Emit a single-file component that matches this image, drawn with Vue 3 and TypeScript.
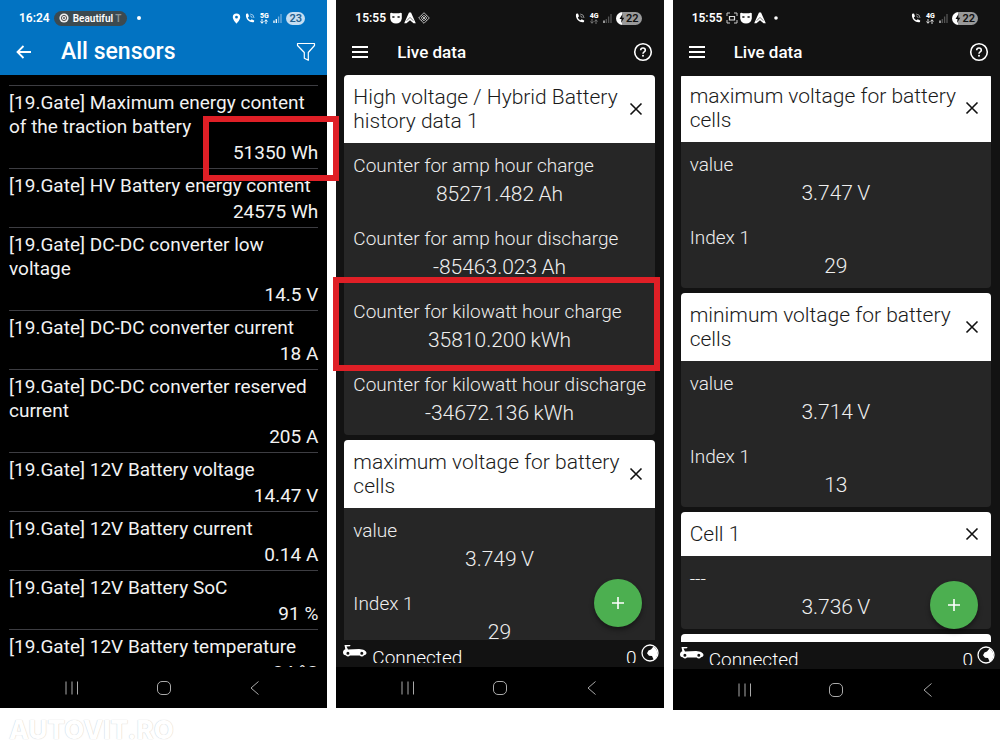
<script setup lang="ts">
interface Sensor { name: string; value: string; marked?: boolean }
interface Reading { label: string; value: string; marked?: boolean }
interface Card { title: string; rows: Reading[] }
interface LivePhone { id: string; count: string; icons: string[]; cards: Card[] }

const sensors: Sensor[] = [
  { name: '[19.Gate] Maximum energy content of the traction battery', value: '51350 Wh', marked: true },
  { name: '[19.Gate] HV Battery energy content', value: '24575 Wh' },
  { name: '[19.Gate] DC-DC converter low voltage', value: '14.5 V' },
  { name: '[19.Gate] DC-DC converter current', value: '18 A' },
  { name: '[19.Gate] DC-DC converter reserved current', value: '205 A' },
  { name: '[19.Gate] 12V Battery voltage', value: '14.47 V' },
  { name: '[19.Gate] 12V Battery current', value: '0.14 A' },
  { name: '[19.Gate] 12V Battery SoC', value: '91 %' },
  { name: '[19.Gate] 12V Battery temperature', value: '24 °C' },
]

const phones: LivePhone[] = [
  {
    id: 'history',
    count: '0',
    icons: ['mask', 'arrow', 'diamond'],
    cards: [
      {
        title: 'High voltage / Hybrid Battery history data 1',
        rows: [
          { label: 'Counter for amp hour charge', value: '85271.482 Ah' },
          { label: 'Counter for amp hour discharge', value: '-85463.023 Ah' },
          { label: 'Counter for kilowatt hour charge', value: '35810.200 kWh', marked: true },
          { label: 'Counter for kilowatt hour discharge', value: '-34672.136 kWh' },
        ],
      },
      {
        title: 'maximum voltage for battery cells',
        rows: [
          { label: 'value', value: '3.749 V' },
          { label: 'Index 1', value: '29' },
        ],
      },
    ],
  },
  {
    id: 'cells',
    count: '0',
    icons: ['scan', 'mask', 'arrow', 'dot'],
    cards: [
      {
        title: 'maximum voltage for battery cells',
        rows: [
          { label: 'value', value: '3.747 V' },
          { label: 'Index 1', value: '29' },
        ],
      },
      {
        title: 'minimum voltage for battery cells',
        rows: [
          { label: 'value', value: '3.714 V' },
          { label: 'Index 1', value: '13' },
        ],
      },
      { title: 'Cell 1', rows: [{ label: '---', value: '3.736 V' }] },
      { title: '', rows: [] },
    ],
  },
]

// A thin space separates a number from its unit.
const withUnit = (value: string): string => value.replace(' ', '\u2009')
</script>

<template>
  <main class="page">
    <div class="phones">
      <section class="phone sensors">
        <header class="top">
          <div class="status">
            <span>16:24</span>
            <span class="pill">
              <svg width="10" height="10" viewBox="0 0 10 10"><circle cx="5" cy="5" r="4.6" fill="#eee" /><circle cx="5" cy="5" r="2.6" fill="none" stroke="#555" /><circle cx="5" cy="5" r="1" fill="#555" /></svg>
              <span>Beautiful <i>T</i></span>
            </span>
            <svg class="lone-dot" width="4" height="4" viewBox="0 0 4 4"><circle cx="2" cy="2" r="2" fill="#fff" /></svg>
            <span class="push"></span>
            <svg width="9" height="11" viewBox="0 0 9 11"><path fill="#fff" fill-rule="evenodd" d="M4.5 0.5a3.7 3.7 0 0 0-3.7 3.7c0 2.6 3.7 6.4 3.7 6.4s3.7-3.8 3.7-6.4A3.7 3.7 0 0 0 4.5 .5zm0 2.3a1.4 1.4 0 1 1 0 2.8 1.4 1.4 0 0 1 0-2.8z" /></svg>
            <svg width="10" height="10" viewBox="0 0 10 10"><path fill="#fff" d="M1.200.8 3 .6l1 2.600-1.200 1.200c.6 1.300 1.400 2.200 2.700 2.900l1.200-1.100L9.200 7.400 9 9.100C4.500 10.300-.3 5.500 1.200.8z" /><path d="M5.200 1a4 4 0 0 1 3.800 4M5.200 2.900A2 2 0 0 1 7.100 5" fill="none" stroke="#a9d0ee" stroke-width=".9" /></svg>
            <span class="net"><b>5G</b><svg width="8" height="5" viewBox="0 0 8 5"><path d="M2 0v4M.5 2.500 2 4.300l1.500-1.800M6 5V1M4.500 2.500 6 .7l1.500 1.800" fill="none" stroke="#fff" /></svg></span>
            <svg width="9" height="10" viewBox="0 0 9 10"><path d="M1 7.500V10M3.300 6v4" stroke="#fff" stroke-width="1.300" /><path d="M5.600 3.500V10M8 1v9" stroke="#74afdd" stroke-width="1.300" /></svg>
            <span class="battery">23</span>
          </div>
          <div class="bar">
            <button aria-label="Back"><svg width="24" height="24" viewBox="0 0 24 24"><path d="M19 12H6M11.500 6 5.500 12l6 6" fill="none" stroke="#fff" stroke-width="1.800" /></svg></button>
            <h1>All sensors</h1>
            <button aria-label="Filter"><svg width="24" height="24" viewBox="0 0 24 24"><path d="M3.500 3.500h17v2l-6.200 7v7.800l-4-2v-5.800L3.500 5.500z" fill="none" stroke="#fff" stroke-width="1.200" stroke-linejoin="round" /></svg></button>
          </div>
        </header>
        <ul class="list">
          <li v-for="s in sensors" :key="s.name">
            <span class="name">{{ s.name }}</span>
            <span class="val">{{ s.value }}</span>
            <span v-if="s.marked" class="mark"></span>
          </li>
        </ul>
        <nav class="nav">
          <button aria-label="Recent apps"><svg width="16" height="16" viewBox="0 0 16 16"><path d="M2 1.500v13M8 1.500v13M13.500 1.500v13" stroke="#aaa" /></svg></button>
          <button aria-label="Home"><svg width="16" height="16" viewBox="0 0 16 16"><rect x="1.500" y="1.500" width="13" height="13" rx="4.500" fill="none" stroke="#aaa" /></svg></button>
          <button aria-label="Back"><svg width="16" height="16" viewBox="0 0 16 16"><path d="M11.500 1.500 4 8l7.500 6.500" fill="none" stroke="#aaa" /></svg></button>
        </nav>
      </section>

      <section v-for="p in phones" :key="p.id" class="phone live" :class="p.id">
        <header class="top">
          <div class="status">
            <span>15:55</span>
            <span class="notes">
              <template v-for="i in p.icons" :key="i">
                <svg v-if="i === 'mask'" width="12" height="12" viewBox="0 0 12 12"><path fill="#fff" fill-rule="evenodd" d="M.2 1.200Q1 .4 3 1.200h6q2-.8 2.800 0V6.500Q11 11.500 6 11.500T.2 6.500zM2.300 4.200v1.600h2.200V4.200zM7.500 4.200v1.600h2.200V4.200z" /></svg>
                <svg v-else-if="i === 'arrow'" width="12" height="12" viewBox="0 0 12 12"><path fill="#fff" d="M5 .5h2L11.800 11.300H9.500L6 8.300l-3.500 3H.2z" /><path d="M2.600 8.800 6 5.400l3.400 3.400" fill="none" stroke="#555" stroke-width=".8" /></svg>
                <svg v-else-if="i === 'diamond'" width="12" height="12" viewBox="0 0 12 12"><path d="M6 .7 11.300 6 6 11.300.7 6zM3.400 3.400l5.200 5.200M8.600 3.400 3.400 8.600M6 3.200 8.800 6 6 8.800 3.200 6z" fill="none" stroke="#ccc" stroke-width=".9" /></svg>
                <svg v-else-if="i === 'scan'" width="12" height="12" viewBox="0 0 12 12"><path d="M1 4V1h3M8 1h3v3M11 8v3H8M4 11H1V8" fill="none" stroke="#ccc" /><path d="M3.500 4.500h5v3.500h-5z" fill="none" stroke="#ddd" stroke-width="1.200" /></svg>
                <svg v-else class="end-dot" width="4" height="4" viewBox="0 0 4 4"><circle cx="2" cy="2" r="1.800" fill="#fff" /></svg>
              </template>
            </span>
            <span class="push"></span>
            <svg width="10" height="10" viewBox="0 0 10 10"><path fill="#fff" d="M1.200.8 3 .6l1 2.600-1.200 1.200c.6 1.300 1.400 2.200 2.700 2.900l1.200-1.100L9.200 7.400 9 9.100C4.500 10.300-.3 5.500 1.200.8z" /><path d="M5.200 1a4 4 0 0 1 3.800 4M5.200 2.900A2 2 0 0 1 7.100 5" fill="none" stroke="#999" stroke-width=".9" /></svg>
            <span class="net"><b>4G</b><svg width="8" height="5" viewBox="0 0 8 5"><path d="M2 0v4M.5 2.500 2 4.300l1.500-1.800M6 5V1M4.500 2.500 6 .7l1.500 1.800" fill="none" :stroke="p.id === 'cells' ? '#ddd' : '#777'" /></svg></span>
            <svg width="9" height="10" viewBox="0 0 9 10"><path d="M1 7.500V10" stroke="#ddd" stroke-width="1.300" /><path d="M3.300 6v4M5.600 3.500V10M8 1v9" stroke="#555" stroke-width="1.300" /></svg>
            <span class="battery"><svg width="6" height="9" viewBox="0 0 6 9"><path d="M3.500 0 .5 5h2L2 9l3.300-5.200h-2z" fill="#111" /></svg>22</span>
          </div>
          <div class="bar">
            <button aria-label="Menu"><svg width="24" height="24" viewBox="0 0 24 24"><path d="M4 7h16M4 12h16M4 17h16" stroke="#fff" stroke-width="1.800" /></svg></button>
            <h1>Live data</h1>
            <button aria-label="Help"><svg width="24" height="24" viewBox="0 0 24 24"><circle cx="12" cy="12" r="8.300" fill="none" stroke="#fff" stroke-width="1.600" /><path d="M9.700 10.200c0-3 4.600-3 4.600 0 0 1.700-2.300 1.700-2.300 3.500" fill="none" stroke="#fff" stroke-width="1.600" /><circle cx="12" cy="15.800" r="1" fill="#fff" /></svg></button>
          </div>
        </header>
        <div class="scroll">
          <div class="cards">
            <article v-for="c in p.cards" :key="c.title" class="card">
              <div class="head">
                <h2>{{ c.title }}</h2>
                <button aria-label="Remove"><svg width="14" height="14" viewBox="0 0 14 14"><path d="M1.500 1.500l11 11M12.500 1.500l-11 11" stroke="#111" stroke-width="1.600" /></svg></button>
              </div>
              <div v-for="r in c.rows" :key="r.label" class="row">
                <div class="label">{{ r.label }}</div>
                <div class="reading">{{ withUnit(r.value) }}</div>
                <span v-if="r.marked" class="mark"></span>
              </div>
            </article>
          </div>
        </div>
        <button class="fab" aria-label="Add"><svg width="14" height="14" viewBox="0 0 14 14"><path d="M7 1v12M1 7h12" stroke="#fff" stroke-width="1.600" /></svg></button>
        <footer class="link">
          <svg width="26" height="14" viewBox="0 0 26 14"><path fill="#fff" fill-rule="evenodd" d="M2.500 1h6l-.5 1.200-3.500.3 1.500 3 11-.5c4.500.3 7.500 2 7.500 4 0 1.300-1 2-2.500 2.200a2.600 2.600 0 0 1-4.300.3H8a2.700 2.700 0 0 1-4.300-.3C2 11 1 10.200 1 8.500 1 7 1.800 5.800 3.300 5.200zM5.900 7.800a1.500 1.500 0 1 0 0 3 1.500 1.500 0 0 0 0-3zm13.900 0a1.500 1.500 0 1 0 0 3 1.500 1.500 0 0 0 0-3z" /></svg>
          <span class="word">Connected</span>
          <span class="word count">{{ p.count }}</span>
          <svg width="18" height="18" viewBox="0 0 18 18"><circle cx="9" cy="9" r="8" fill="#121212" stroke="#fff" stroke-width="1.300" /><path fill="#fff" d="M12.500 2.500 10 5.500 7.500 6.500 6 9.200l2 2.500 3 .3 1.800 4a8 8 0 0 0-.3-13.500z" /></svg>
        </footer>
        <nav class="nav">
          <button aria-label="Recent apps"><svg width="16" height="16" viewBox="0 0 16 16"><path d="M2 1.500v13M8 1.500v13M13.500 1.500v13" stroke="#aaa" /></svg></button>
          <button aria-label="Home"><svg width="16" height="16" viewBox="0 0 16 16"><rect x="1.500" y="1.500" width="13" height="13" rx="4.500" fill="none" stroke="#aaa" /></svg></button>
          <button aria-label="Back"><svg width="16" height="16" viewBox="0 0 16 16"><path d="M11.500 1.500 4 8l7.500 6.500" fill="none" stroke="#aaa" /></svg></button>
        </nav>
      </section>
    </div>
    <footer class="brand">AUTOVIT.RO</footer>
  </main>
</template>

<style>
body { margin: 0; background: #fff; }
</style>

<style scoped>
* { box-sizing: border-box; }
svg { display: block; flex: none; }
button { display: flex; align-items: center; justify-content: center; padding: 0; border: 0; background: none; cursor: pointer; }
.page { display: flex; flex-direction: column; height: 100vh; overflow: hidden; font-family: Roboto, "Liberation Sans", sans-serif; }
.phones { flex: 1; min-height: 0; display: grid; grid-template-columns: repeat(3, minmax(0, 1fr)); grid-template-rows: minmax(0, 1fr); gap: 9px; }
.phone { position: relative; display: flex; flex-direction: column; min-height: 0; margin-bottom: 2px; background: #000; color: #fff; }
.phone.cells { margin-bottom: 0; }
.live { background: #121212; }
.sensors { z-index: 1; }

.top { flex: none; height: 75px; padding-top: 8px; }
.sensors .top { background: #0273c2; }
.status { display: flex; align-items: center; gap: 4px; height: 20px; padding: 0 22px 0 19px; font-size: 12px; font-weight: 600; }
.push { flex: 1; }
.notes { display: flex; align-items: center; gap: 2px; }
.end-dot { margin-left: 6px; }
.lone-dot { margin-left: 6px; }
.pill { display: flex; align-items: center; gap: 4px; height: 15px; padding: 0 6px 0 5px; border-radius: 8px; background: #3c4a50; font-size: 10px; }
.pill i { font-style: normal; color: #8b9396; }
.net { display: flex; flex-direction: column; align-items: center; width: 10px; }
.net b { font-size: 7px; line-height: 6px; }
.battery { display: flex; align-items: center; justify-content: center; gap: 1px; height: 13px; min-width: 19px; padding: 0 3px; border-radius: 7px; background: #c6def2; color: #24618f; font-size: 11px; line-height: 13px; }
.live .battery { background: linear-gradient(90deg, #fff 25%, #999 25%); color: #111; }

.bar { display: flex; align-items: center; height: 48px; padding: 0 9px 0 12px; }
.bar h1 { flex: 1; margin: 0 0 0 25px; font-size: 17px; line-height: 24px; font-weight: 500; }
.sensors .bar h1 { font-size: 23px; }

.list { flex: 1; min-height: 0; margin: 0; padding: 10px 9px 0; list-style: none; overflow-x: visible; overflow-y: clip; }
.list li { position: relative; display: flex; flex-direction: column; padding: 5px 0 1px; border-top: 1px solid #3d3d42; font-size: 19px; color: #f2f2f2; }
.name { line-height: 24px; }
.val { line-height: 28px; text-align: right; }
.mark { position: absolute; border: 6px solid #df1f26; pointer-events: none; z-index: 2; }
.list .mark { top: 30px; bottom: -13px; right: -21px; width: 136px; }

.scroll { flex: 1; min-height: 0; padding: 0 9px 0 8px; overflow-x: visible; overflow-y: clip; }
.cards { display: flex; flex-direction: column; gap: 5px; }
.cells .scroll { margin-top: 1px; }
.cells .cards { margin-top: -2px; }
.card { border-radius: 4px; background: #262626; }
.head { display: flex; align-items: center; min-height: 44px; padding: 10px 12px 10px 9px; border-radius: 4px 4px 0 0; background: #fff; color: #1a1a1a; }
.head h2 { flex: 1; margin: 0; font-size: 21px; line-height: 24px; font-weight: 300; }
.row { position: relative; padding: 11px 0 6px 9px; font-size: 19px; font-weight: 300; color: #eee; }
.label { line-height: 24px; }
.reading { padding-right: 9px; font-size: 21px; line-height: 32px; text-align: center; }
.row .mark { top: -12px; bottom: -9px; left: -11px; right: -5px; }

.fab { position: absolute; right: 22px; bottom: 81px; width: 48px; height: 48px; border-radius: 50%; background: #4caf50; box-shadow: 0 3px 5px rgba(0, 0, 0, 0.4); }
.link { flex: none; display: flex; gap: 4px; height: 27px; padding: 5px 5px 0 6px; }
.link svg { margin-top: -1px; }
.word { height: 18px; overflow: hidden; font-size: 19px; line-height: 26px; font-weight: 300; }
.count { margin-left: auto; }

.nav { flex: none; display: flex; align-items: center; justify-content: space-between; height: 41px; padding: 0 64px; background: #000; }
.brand { flex: none; height: 40px; padding-left: 9px; color: #fff; font-family: Inter, sans-serif; font-size: 26px; line-height: 40px; font-weight: 800; text-shadow: 0 0 1px #bbb; }
</style>
